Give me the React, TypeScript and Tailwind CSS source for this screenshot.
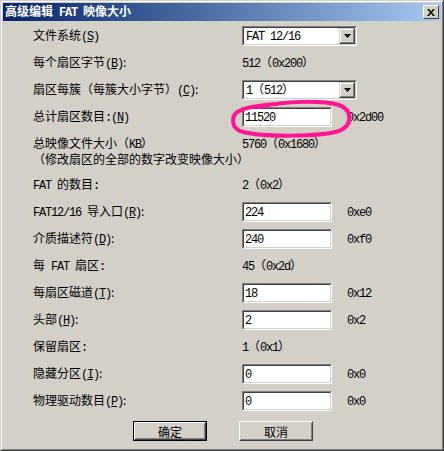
import type { ReactNode } from 'react'

// split text into latin runs (SimSun-like mono) and CJK runs
const txt = (s: string) =>
  s
    .split(/([\x20-\x7e]+)/)
    .filter(Boolean)
    .map((r, i) =>
      /^[\x20-\x7e]+$/.test(r) ? (
        <span key={i} className="font-['Liberation_Mono'] tracking-[-1.2px] whitespace-pre">
          {r}
        </span>
      ) : (
        <span key={i}>{r}</span>
      )
    )

function Key({ k }: { k: string }) {
  return (
    <span className="font-['Liberation_Mono'] tracking-[-1.2px] whitespace-pre">
      (<u>{k}</u>)
    </span>
  )
}

function Sunken({ w, children }: { w: string; children: ReactNode }) {
  return (
    <div className={`${w} h-[20px] border border-t-[#808080] border-l-[#808080] border-b-white border-r-white`}>
      <div className="h-full border border-t-[#404040] border-l-[#404040] border-b-[#d4d0c8] border-r-[#d4d0c8] bg-white flex items-center">
        {children}
      </div>
    </div>
  )
}

function TextBox({ value }: { value: string }) {
  return (
    <Sunken w="w-[90px]">
      <span className="pl-[1px]">{txt(value)}</span>
    </Sunken>
  )
}

function Combo({ value }: { value: string }) {
  return (
    <Sunken w="w-[115px]">
      <span className="flex-1 pl-[2px]">{txt(value)}</span>
      <div className="w-[16px] h-full border border-t-[#d4d0c8] border-l-[#d4d0c8] border-b-[#404040] border-r-[#404040]">
        <div className="h-full border border-t-white border-l-white border-b-[#808080] border-r-[#808080] bg-[#d4d0c8] flex items-center justify-center">
          <svg width="7" height="4" viewBox="0 0 7 4">
            <path d="M0 0h7L3.5 4z" fill="#000" />
          </svg>
        </div>
      </div>
    </Sunken>
  )
}

function Row({ label, children }: { label: ReactNode; children?: ReactNode }) {
  return (
    <div className="flex h-[27px] items-center">
      <div className="w-[209px] shrink-0 whitespace-pre">{label}</div>
      {children}
    </div>
  )
}

function Boxed({ value, hex }: { value: string; hex: string }) {
  return (
    <>
      <TextBox value={value} />
      <span className="ml-[15px]">{txt(hex)}</span>
    </>
  )
}

function Button({ label, isDefault }: { label: string; isDefault?: boolean }) {
  return (
    <div className={`w-[74px] h-[20px] ${isDefault ? 'border border-black' : ''}`}>
      <div className="h-full border border-t-white border-l-white border-b-[#404040] border-r-[#404040]">
        <div className="h-full border border-t-[#d4d0c8] border-l-[#d4d0c8] border-b-[#808080] border-r-[#808080] flex items-center justify-center">
          {label}
        </div>
      </div>
    </div>
  )
}

export default function App() {
  return (
    <div className="relative w-[444px] h-[451px] bg-[#d4d0c8] font-['Noto_Sans_CJK_SC',sans-serif] text-[12px] leading-[15px] text-black border border-t-[#d4d0c8] border-l-[#d4d0c8] border-b-[#404040] border-r-[#404040]">
      <div className="h-full border border-t-white border-l-white border-b-[#808080] border-r-[#808080] p-[1px]">
        {/* title bar */}
        <div className="h-[18px] flex items-center justify-between bg-gradient-to-r from-[#0a246a] to-[#a6caf0] pl-[2px] pr-[2px]">
          <span className="text-white font-bold">{txt('高级编辑 FAT 映像大小')}</span>
          <div className="w-[16px] h-[14px] border border-t-white border-l-white border-b-[#404040] border-r-[#404040] bg-[#d4d0c8] flex items-center justify-center">
            <svg width="8" height="7" viewBox="0 0 8 7">
              <path d="M0 0h2l2 2.5L6 0h2L5 3.5 8 7H6L4 4.5 2 7H0l3-3.5z" fill="#000" />
            </svg>
          </div>
        </div>

        <div className="pl-[30px] pt-[1px]">
          <Row label={<>{txt('文件系统')}<Key k="S" /></>}>
            <Combo value="FAT 12/16" />
          </Row>
          <Row label={<>{txt('每个扇区字节')}<Key k="B" />:</>}>
            <span>{txt('512（0x200）')}</span>
          </Row>
          <Row label={<>{txt('扇区每簇（每簇大小字节）')}<Key k="C" />:</>}>
            <Combo value="1（512）" />
          </Row>
          <Row label={<>{txt('总计扇区数目:')}<Key k="N" /></>}>
            <Boxed value="11520" hex="0x2d00" />
          </Row>

          <div className="pt-[6px] pb-[5px]">
            <div className="flex h-[15px] items-center">
              <div className="w-[209px] shrink-0">{txt('总映像文件大小（KB）')}</div>
              <span>{txt('5760（0x1680）')}</span>
            </div>
            <div className="h-[15px] whitespace-pre">{txt('（修改扇区的全部的数字改变映像大小）')}</div>
          </div>

          <Row label={txt('FAT 的数目:')}>
            <span>{txt('2（0x2）')}</span>
          </Row>
          <Row label={<>{txt('FAT12/16 导入口')}<Key k="R" />:</>}>
            <Boxed value="224" hex="0xe0" />
          </Row>
          <Row label={<>{txt('介质描述符')}<Key k="D" />:</>}>
            <Boxed value="240" hex="0xf0" />
          </Row>
          <Row label={txt('每 FAT 扇区:')}>
            <span>{txt('45（0x2d）')}</span>
          </Row>
          <Row label={<>{txt('每扇区磁道')}<Key k="T" />:</>}>
            <Boxed value="18" hex="0x12" />
          </Row>
          <Row label={<>{txt('头部')}<Key k="H" />:</>}>
            <Boxed value="2" hex="0x2" />
          </Row>
          <Row label={txt('保留扇区:')}>
            <span>{txt('1（0x1）')}</span>
          </Row>
          <Row label={<>{txt('隐藏分区')}<Key k="I" />:</>}>
            <Boxed value="0" hex="0x0" />
          </Row>
          <Row label={<>{txt('物理驱动数目')}<Key k="P" />:</>}>
            <Boxed value="0" hex="0x0" />
          </Row>
        </div>

        <div className="flex gap-[32px] pl-[130px] mt-[7px]">
          <Button label="确定" isDefault />
          <Button label="取消" />
        </div>
      </div>

      {/* hand-drawn highlight around the sector count */}
      <svg className="absolute left-0 top-0 pointer-events-none" width="444" height="451" viewBox="0 0 444 451">
        <path
          d="M258 106 C285 100 320 99 338 104 C352 109 352 124 338 130 C318 136 262 136 242 131 C230 128 229 115 238 110 C246 106 262 104 276 103"
          fill="none"
          stroke="#ff1493"
          strokeWidth="4"
          strokeLinecap="round"
        />
      </svg>
    </div>
  )
}
